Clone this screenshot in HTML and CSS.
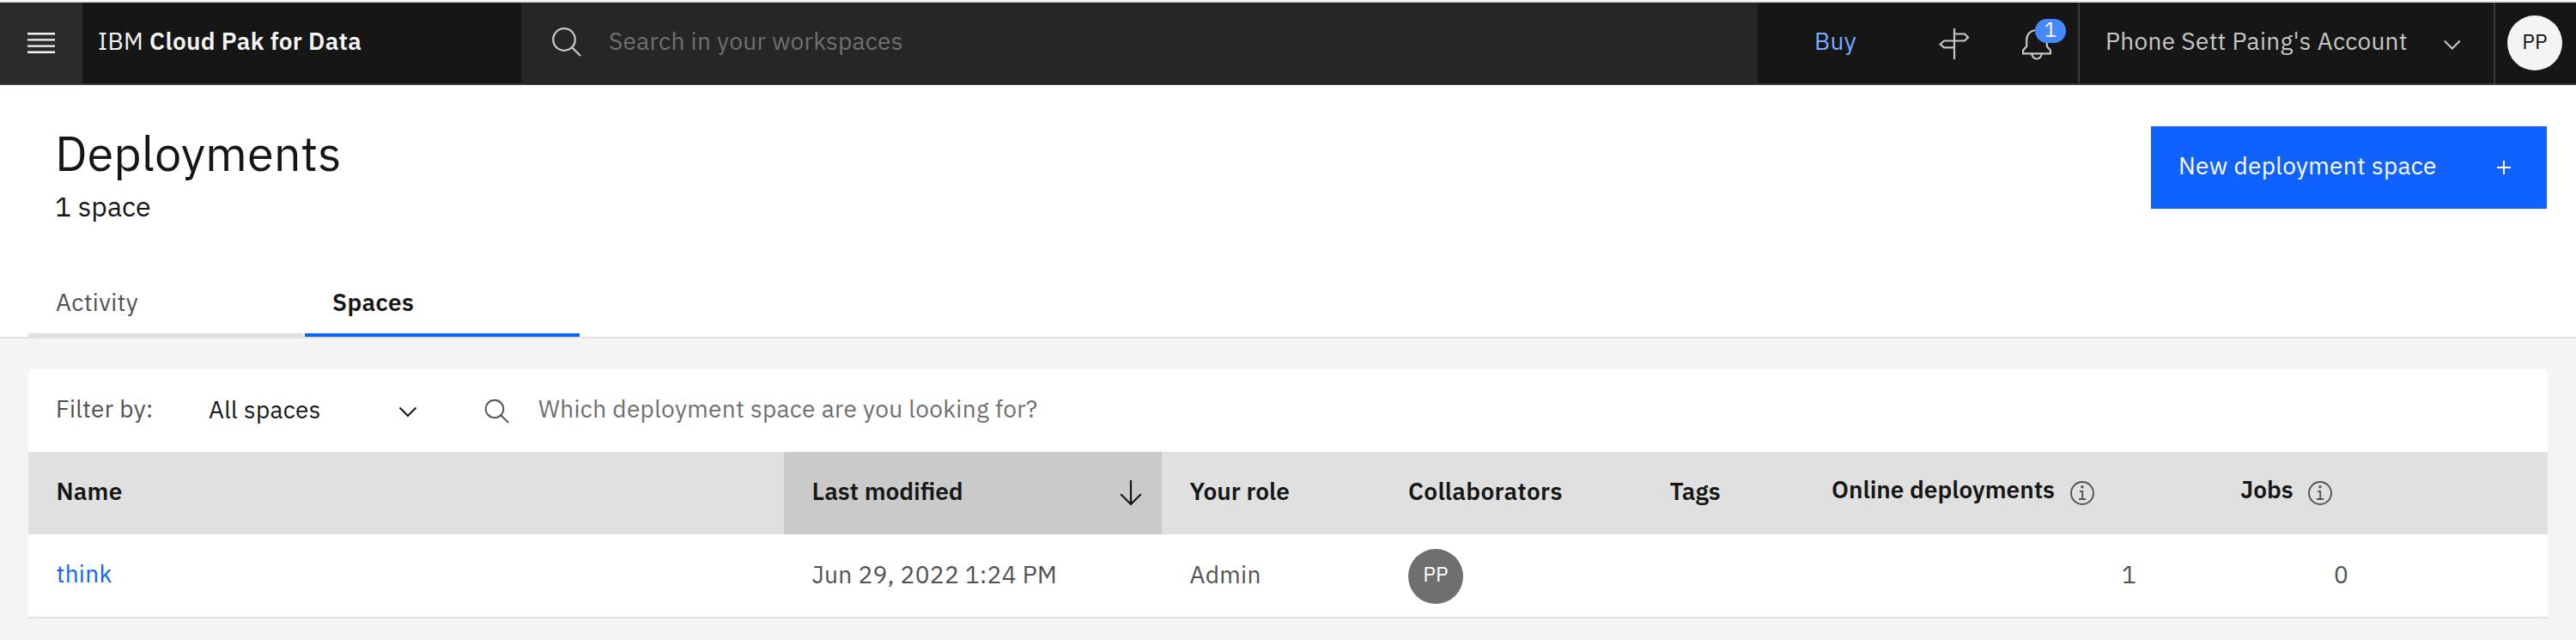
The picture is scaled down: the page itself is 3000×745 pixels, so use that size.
FILE: index.html
```html
<!DOCTYPE html>
<html lang="en">
<head>
<meta charset="utf-8">
<title>Deployments - IBM Cloud Pak for Data</title>
<link rel="stylesheet" href="styles.css">
</head>
<body>
<header class="topbar">
  <div class="menu">
    <svg width="32" height="24" viewBox="0 0 32 24" fill="#f4f4f4"><path d="M0 0h32v2.4H0zM0 7.2h32v2.4H0zM0 14.4h32v2.4H0zM0 21.6h32V24H0z"/></svg>
  </div>
  <div class="brand">IBM <strong class="brand-product">Cloud Pak for Data</strong></div>
  <div class="global-search">
    <svg class="global-search-icon" width="36" height="36" viewBox="0 0 36 36" fill="none" stroke="#c6c6c6" stroke-width="2.3"><circle cx="15" cy="15" r="12.8"/><path d="M24.2 24.2l9.8 9.8"/></svg>
    <span class="global-search-text">Search in your workspaces</span>
  </div>
  <nav class="actions">
    <a class="buy">Buy</a>
    <svg class="signpost" width="36" height="38" viewBox="0 0 36 38" fill="none" stroke="#c6c6c6" stroke-width="2.2"><path d="M18 1v36M18 7.500h12l4 4-4 4H6l-4.400 4 4.400 3.900h12"/></svg>
    <div class="bell">
      <svg width="36" height="38" viewBox="0 0 36 38" fill="none" stroke="#c6c6c6" stroke-width="2.2"><path d="M18 3C11 3 6.200 8 6.200 14.500V22L2.100 26.500V30.400H33.900V26.500L29.800 22V14.500C29.800 8 25 3 18 3zM12.300 30.600a5.700 5.900 0 0 0 11.400 0"/></svg>
      <span class="badge">1</span>
    </div>
  </nav>
  <div class="account">
    <span class="account-name">Phone Sett Paing's Account</span>
    <svg class="account-chevron" width="20" height="13" viewBox="0 0 20 13" fill="none" stroke="#c6c6c6" stroke-width="2"><path d="M.8 1.500l9 9 9-9"/></svg>
  </div>
  <div class="profile"><span class="avatar avatar-light">PP</span></div>
</header>

<section class="page-head">
  <div class="title-row">
    <div>
      <h1 class="title">Deployments</h1>
      <p class="subtitle">1 space</p>
    </div>
    <div class="primary"><span class="primary-label">New deployment space</span>
      <svg class="plus" width="16" height="16" viewBox="0 0 16 16" fill="#fff"><path d="M7 0h2v7h7v2H9v7H7V9H0V7h7z"/></svg>
    </div>
  </div>
  <nav class="tabs">
    <a class="tab">Activity</a>
    <a class="tab tab-active">Spaces</a>
  </nav>
</section>

<main class="panel">
  <div class="toolbar">
    <span class="filter-label">Filter by:</span>
    <div class="select"><span class="select-value">All spaces</span>
      <svg class="select-chevron" width="22" height="13" viewBox="0 0 22 13" fill="none" stroke="#161616" stroke-width="2"><path d="M1.500 1.500l9.500 9.500 9.500-9.500"/></svg>
    </div>
    <svg class="table-search-icon" width="30" height="30" viewBox="0 0 30 30" fill="none" stroke="#525252" stroke-width="1.9"><circle cx="12" cy="12" r="10.300"/><path d="M19.500 19.500l8.700 8.700"/></svg>
    <span class="table-search">Which deployment space are you looking for?</span>
  </div>
  <div class="row head">
    <div class="cell h-name">Name</div>
    <div class="cell sorted"><span class="h-modified">Last modified</span>
      <svg class="sort" width="26" height="30" viewBox="0 0 26 30" fill="none" stroke="#161616" stroke-width="2.200"><path d="M13 0v28M1.200 16.200L13 28l11.800-11.800"/></svg>
    </div>
    <div class="cell">Your role</div>
    <div class="cell h-collab">Collaborators</div>
    <div class="cell">Tags</div>
    <div class="cell raised"><span class="h-online">Online deployments</span>
      <svg class="info" width="28" height="28" viewBox="0 0 28 28" fill="none" stroke="#525252" stroke-width="1.900"><circle cx="14" cy="14" r="13"/><circle cx="14" cy="6.800" r="1.700" fill="#525252" stroke="none"/><path d="M11 11.900h3.200v9M10 21h8.200"/></svg>
    </div>
    <div class="cell raised"><span class="h-jobs">Jobs</span>
      <svg class="info" width="28" height="28" viewBox="0 0 28 28" fill="none" stroke="#525252" stroke-width="1.900"><circle cx="14" cy="14" r="13"/><circle cx="14" cy="6.800" r="1.700" fill="#525252" stroke="none"/><path d="M11 11.900h3.200v9M10 21h8.200"/></svg>
    </div>
  </div>
  <div class="row body">
    <div class="cell"><a class="space-link">think</a></div>
    <div class="cell date">Jun 29, 2022 1:24 PM</div>
    <div class="cell role">Admin</div>
    <div class="cell collab"><span class="avatar avatar-dark">PP</span></div>
    <div class="cell"></div>
    <div class="cell num online">1</div>
    <div class="cell num jobs">0</div>
  </div>
</main>
</body>
</html>
```
FILE: styles.css
```css
* { box-sizing: border-box; }
body {
  margin: 0;
  min-height: 745px;
  padding-top: 1px;
  background: linear-gradient(#fff 1px, #f4f4f4 1px);
  color: #161616;
  font: 400 28px/31px "IBM Plex Sans", Roboto, "Noto Sans", sans-serif;
  white-space: nowrap;
}
svg { display: block; flex: none; }

/* Top bar */
.topbar {
  display: flex;
  height: 98px;
  border-top: 2px solid #e0e0e0;
  background: #161616;
  letter-spacing: .32px;
}
.topbar > * { border-bottom: 2px solid #393939; }
.topbar > .global-search { border-bottom-width: 1px; }
.menu { width: 96px; padding: 35px 0 0 32px; background: #2b2b2b; }
.brand { width: 511px; padding: 29px 0 0 18px; color: #f4f4f4; }
.brand-product { font-weight: 600; }
.global-search { display: flex; width: 1440px; padding-left: 35px; background: #262626; }
.global-search-icon { margin-top: 28px; }
.global-search-text { margin: 29px 0 0 31px; color: #6f6f6f; }
.actions { display: flex; width: 373px; padding-left: 66px; }
.buy { width: 145px; padding-top: 29px; color: #78a9ff; }
.signpost { margin-top: 29px; }
.bell { position: relative; width: 36px; height: 38px; margin: 29px 0 0 60px; }
.badge {
  position: absolute;
  left: 16px;
  top: -10px;
  width: 36px;
  height: 28px;
  border-radius: 14px;
  background: #4589ff;
  color: #fff;
  font-size: 24px;
  line-height: 24px;
  text-align: center;
}
.account { display: flex; width: 484px; padding-left: 30px; border-left: 2px solid #393939; color: #c6c6c6; }
.account-name { width: 394px; padding-top: 29px; }
.account-chevron { margin-top: 43px; }
.profile { flex: 1; padding: 15px 0 0 14px; border-left: 2px solid #393939; }
.avatar {
  display: block;
  width: 64px;
  height: 64px;
  border-radius: 50%;
  font-size: 24px;
  line-height: 26px;
  text-align: center;
  letter-spacing: .32px;
}
.avatar-light { padding-top: 17px; background: #f4f4f4; color: #161616; }
.avatar-dark { padding-top: 16px; background: #6f6f6f; color: #fff; }

/* Page heading */
.page-head { height: 295px; padding: 48px 33px 0; border-bottom: 2px solid #e0e0e0; background: #fff; }
.title-row { display: flex; justify-content: space-between; height: 173px; }
.title { margin: 0 0 13px 31px; font-size: 56px; font-weight: 400; line-height: 62px; }
.subtitle { margin: 0 0 0 31px; font-size: 32px; line-height: 36px; }
.primary { display: flex; width: 461px; height: 96px; margin-right: 1px; background: #0f62fe; color: #fff; }
.primary-label { width: 371px; padding: 30px 0 0 32px; letter-spacing: .32px; }
.plus { margin: 40px 0 0 32px; }
.tabs { display: flex; gap: 2px; }
.tab { width: 320px; height: 72px; padding: 16px 0 0 32px; border-bottom: 4px solid #e0e0e0; color: #525252; letter-spacing: .32px; }
.tab-active { border-color: #0f62fe; color: #161616; font-weight: 600; }

/* Spaces table */
.panel { margin: 36px 33px 0; background: #fff; }
.toolbar { display: flex; height: 96px; padding: 30px 0 0 32px; color: #525252; letter-spacing: .32px; }
.filter-label { width: 178px; }
.select { display: flex; width: 321px; padding-top: 1px; color: #161616; }
.select-value { width: 221px; }
.select-chevron { margin-top: 12px; }
.table-search-icon { margin-top: 4px; }
.table-search { margin-left: 33px; color: #6f6f6f; }
.row { display: grid; grid-template-columns: 880px 440px 254px 305px 188px 476px 391px; }
.head { height: 96px; background: #e0e0e0; font-weight: 600; }
.cell { padding: 30px 0 0 32.5px; }
.sorted { display: flex; background: #cacaca; }
.sort { margin: 3px 0 0 183.5px; }
.raised { display: flex; padding: 28px 0 0 33px; }
.h-name { letter-spacing: .16px; }
.h-modified { width: 175px; }
.h-collab { padding-left: 33px; letter-spacing: .32px; }
.h-online { width: 278px; }
.h-jobs { width: 79px; }
.info { margin-top: 6px; }
.body { height: 98px; border-bottom: 2px solid #e0e0e0; color: #525252; letter-spacing: .32px; }
.space-link { color: #0f62fe; }
.date { padding-top: 31px; }
.role { padding-top: 31px; }
.collab { padding: 17px 0 0 33px; }
.num { padding-top: 31px; text-align: right; }
.online { padding-right: 88px; }
.jobs { padding-right: 232px; }
```
